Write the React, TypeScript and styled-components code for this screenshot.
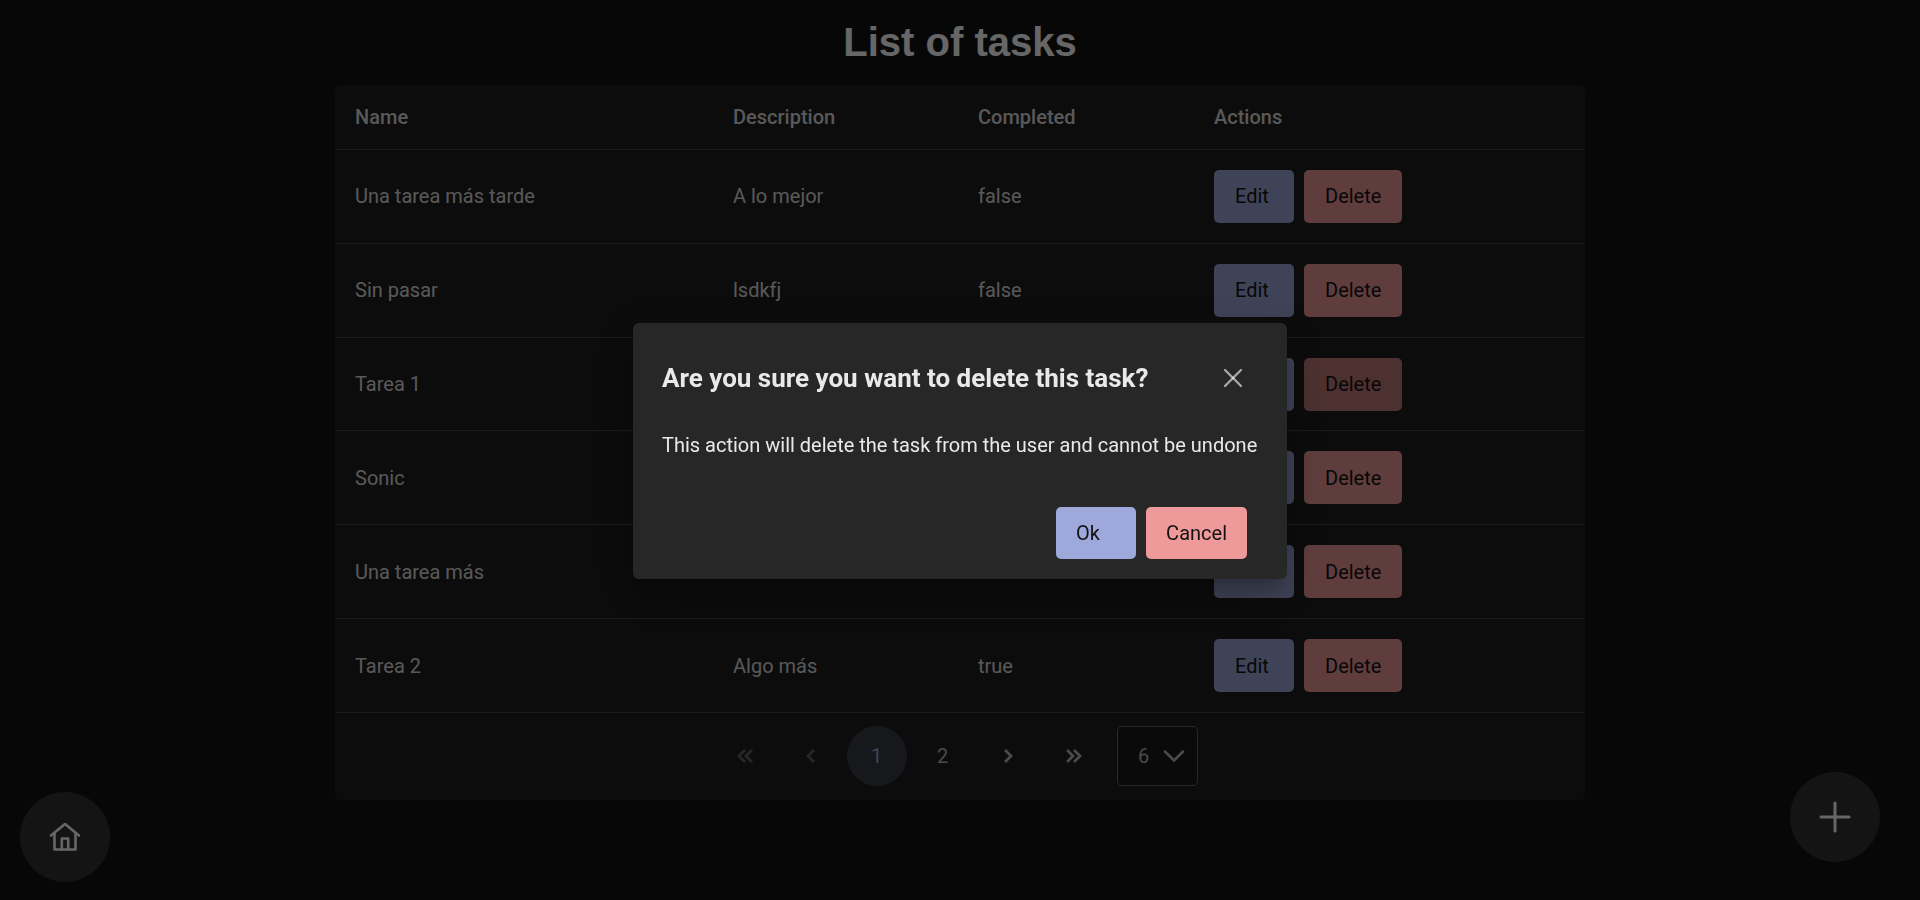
import React from 'react';
import styled, { createGlobalStyle } from 'styled-components';
import { ChevronDown, X } from 'lucide-react';

const tasks = [
  { name: 'Una tarea más tarde', description: 'A lo mejor', completed: 'false' },
  { name: 'Sin pasar', description: 'lsdkfj', completed: 'false' },
  { name: 'Tarea 1', description: '', completed: '', deleteHovered: true },
  { name: 'Sonic', description: '', completed: '' },
  { name: 'Una tarea más', description: '', completed: '' },
  { name: 'Tarea 2', description: 'Algo más', completed: 'true' },
];

const PagerIcon = ({ d, width }: { d: string; width: number }) => (
  <svg width={width} height="16" viewBox={`0 0 ${width} 16`} fill="none" stroke="currentColor" strokeWidth="2.800">
    <path d={d} />
  </svg>
);

const App = () => {
  return (
    <>
      <GlobalStyle />
      <Page>
        <Title>List of tasks</Title>
        <TableCard>
          <Table>
            <colgroup>
              <col style={{ width: 378 }} />
              <col style={{ width: 245 }} />
              <col style={{ width: 236 }} />
              <col />
            </colgroup>
            <thead>
              <tr>
                <HeadCell>Name</HeadCell>
                <HeadCell>Description</HeadCell>
                <HeadCell>Completed</HeadCell>
                <HeadCell>Actions</HeadCell>
              </tr>
            </thead>
            <tbody>
              {tasks.map((task) => (
                <tr key={task.name}>
                  <Cell>{task.name}</Cell>
                  <Cell>{task.description}</Cell>
                  <Cell>{task.completed}</Cell>
                  <Cell>
                    <Actions>
                      <ActionButton $tone="primary">Edit</ActionButton>
                      <ActionButton $tone={task.deleteHovered ? 'dangerHover' : 'danger'}>Delete</ActionButton>
                    </Actions>
                  </Cell>
                </tr>
              ))}
            </tbody>
          </Table>
          <Pagination>
            <PageButton $disabled><PagerIcon width={18} d="M9 2 3 8l6 6M16 2l-6 6 6 6" /></PageButton>
            <PageButton $disabled><PagerIcon width={10} d="M8 2 2 8l6 6" /></PageButton>
            <PageButton $active>1</PageButton>
            <PageButton>2</PageButton>
            <PageButton><PagerIcon width={10} d="m2 2 6 6-6 6" /></PageButton>
            <PageButton><PagerIcon width={18} d="m2 2 6 6-6 6M9 2l6 6-6 6" /></PageButton>
            <PageSize>
              6
              <ChevronDown size={36} strokeWidth={1.700} />
            </PageSize>
          </Pagination>
        </TableCard>
        <RoundButton $side="left" $bottom={18}>
          <svg width="32" height="30" viewBox="0 0 32 30" fill="none" stroke="currentColor" strokeWidth="2.600" strokeLinejoin="round" strokeLinecap="round">
            <path d="M2 13.500 16 2l14 11.500" />
            <path d="M5.500 11v16.500h21V11" />
            <path d="M12.800 27.500V16.500h6.400v11" />
          </svg>
        </RoundButton>
        <RoundButton $side="right" $bottom={38}>
          <svg width="32" height="32" viewBox="0 0 32 32" fill="none" stroke="currentColor" strokeWidth="3" strokeLinecap="round">
            <path d="M16 2v28M2 16h28" />
          </svg>
        </RoundButton>
      </Page>
      <Backdrop>
        <Dialog>
          <DialogHeader>
            <DialogTitle>Are you sure you want to delete this task?</DialogTitle>
            <CloseButton><X size={32} strokeWidth={1.700} /></CloseButton>
          </DialogHeader>
          <DialogBody>This action will delete the task from the user and cannot be undone</DialogBody>
          <DialogFooter>
            <ActionButton $tone="primary">Ok</ActionButton>
            <ActionButton $tone="danger">Cancel</ActionButton>
          </DialogFooter>
        </Dialog>
      </Backdrop>
    </>
  );
};

export default App;

const buttonColors = {
  primary: '#9fa8da',
  danger: '#ef9a9a',
  dangerHover: '#bf7b78',
};

const GlobalStyle = createGlobalStyle`
  html, body {
    margin: 0;
    background: #121212;
    font-family: Roboto, "Liberation Sans", sans-serif;
    color: rgba(255, 255, 255, 0.87);
  }
  * {
    box-sizing: border-box;
  }
`;

const Page = styled.main`
  height: 900px;
  overflow: hidden;
  display: flex;
  flex-direction: column;
  align-items: center;
`;

const Title = styled.h1`
  margin: 18px 0 0;
  font-family: "Liberation Sans", Arial, sans-serif;
  font-size: 40px;
  line-height: 48px;
  font-weight: 700;
  color: #fff;
`;

const TableCard = styled.section`
  width: 1250px;
  margin-top: 19px;
  background: #1e1e1e;
  border-radius: 6px;
  overflow: hidden;
`;

const Table = styled.table`
  width: 100%;
  table-layout: fixed;
  border-collapse: separate;
  border-spacing: 0;
`;

const HeadCell = styled.th`
  height: 65px;
  padding: 0 20px;
  text-align: left;
  font-size: 20px;
  font-weight: 500;
  border-bottom: 1px solid #444;
`;

const Cell = styled.td`
  height: 93.830px;
  padding: 0 20px;
  font-size: 20px;
  border-bottom: 1px solid #444;
`;

const Actions = styled.div`
  display: flex;
  gap: 10px;

  button {
    padding: 0 21px;
  }
`;

const ActionButton = styled.button<{ $tone: keyof typeof buttonColors }>`
  min-width: 80px;
  height: 53px;
  padding: 0 20px;
  border: 0;
  border-radius: 5px;
  text-align: left;
  font-family: inherit;
  font-size: 20px;
  color: #121212;
  background: ${({ $tone }) => buttonColors[$tone]};
`;

const Pagination = styled.nav`
  height: 87px;
  padding-right: 7px;
  display: flex;
  align-items: center;
  justify-content: center;
  gap: 5.800px;
`;

const PageButton = styled.button<{ $active?: boolean; $disabled?: boolean }>`
  width: 60px;
  height: 60px;
  padding: 0;
  display: flex;
  align-items: center;
  justify-content: center;
  border: 0;
  border-radius: 50%;
  font-family: inherit;
  font-size: 20px;
  color: ${({ $active, $disabled }) =>
    $active ? '#9fa8da' : $disabled ? 'rgba(255, 255, 255, 0.3)' : 'rgba(255, 255, 255, 0.7)'};
  background: ${({ $active }) => ($active ? '#373c48' : 'transparent')};
`;

const PageSize = styled.div`
  width: 81px;
  height: 60px;
  margin-left: 7px;
  padding: 0 5px 0 20px;
  display: flex;
  align-items: center;
  justify-content: space-between;
  border: 1px solid #666;
  border-radius: 5px;
  background: #1a1a1a;
  font-size: 20px;
  color: rgba(255, 255, 255, 0.7);
`;

const RoundButton = styled.button<{ $side: 'left' | 'right'; $bottom: number }>`
  position: fixed;
  ${({ $side }) => $side}: ${({ $side }) => ($side === 'left' ? 20 : 40)}px;
  bottom: ${({ $bottom }) => $bottom}px;
  width: 90px;
  height: 90px;
  display: flex;
  align-items: center;
  justify-content: center;
  padding: 0;
  border: 0;
  border-radius: 50%;
  background: #333;
  color: #fff;
`;

const Backdrop = styled.div`
  position: fixed;
  inset: 0;
  padding-top: 2px;
  display: flex;
  align-items: center;
  justify-content: center;
  background: rgba(0, 0, 0, 0.6);
`;

const Dialog = styled.div`
  width: 654px;
  height: 256px;
  padding: 0 40px 20px 29px;
  display: flex;
  flex-direction: column;
  background: #272727;
  border-radius: 6px;
  box-shadow: 0 11px 15px -7px rgba(0, 0, 0, 0.2), 0 24px 38px 3px rgba(0, 0, 0, 0.14), 0 9px 46px 8px rgba(0, 0, 0, 0.12);
`;

const DialogHeader = styled.header`
  height: 110px;
  display: flex;
  align-items: center;
  justify-content: space-between;
`;

const DialogTitle = styled.h2`
  margin: 0;
  font-size: 26px;
  font-weight: 700;
  color: rgba(255, 255, 255, 0.9);
`;

const CloseButton = styled.button`
  display: flex;
  padding: 0;
  margin-right: -2px;
  border: 0;
  background: transparent;
  color: rgba(255, 255, 255, 0.6);
`;

const DialogBody = styled.p`
  margin: 0 -20px 0 0;
  white-space: nowrap;
  font-size: 20px;
  line-height: 24px;
  color: rgba(255, 255, 255, 0.9);
`;

const DialogFooter = styled.footer`
  margin-top: auto;
  display: flex;
  justify-content: flex-end;
  gap: 10px;

  button {
    height: 52px;
  }
`;
